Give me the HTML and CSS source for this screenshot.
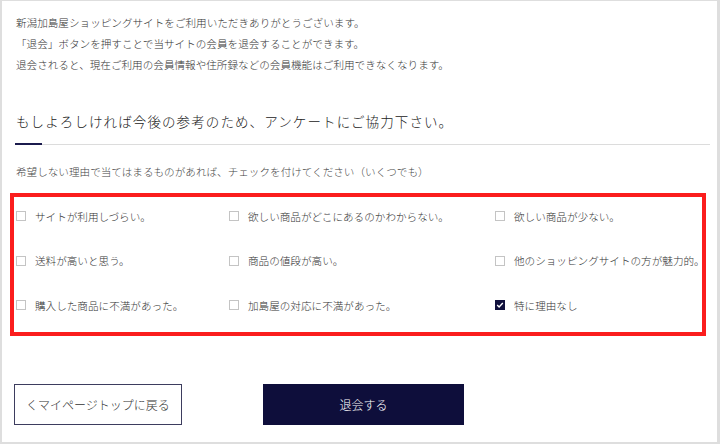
FILE: index.html
```html
<!DOCTYPE html>
<html lang="ja">
<head>
    <meta charset="UTF-8">
    <meta name="viewport" content="width=device-width, initial-scale=1.0">
    <title>退会手続き</title>
    <link rel="stylesheet" href="styles.css">
</head>
<body>
    <div class="page">
        <div class="intro">
            <p>新潟加島屋ショッピングサイトをご利用いただきありがとうございます。</p>
            <p>「退会」ボタンを押すことで当サイトの会員を退会することができます。</p>
            <p>退会されると、現在ご利用の会員情報や住所録などの会員機能はご利用できなくなります。</p>
        </div>

        <h2 class="survey-title">もしよろしければ今後の参考のため、アンケートにご協力下さい。</h2>
        <p class="survey-note">希望しない理由で当てはまるものがあれば、チェックを付けてください（いくつでも）</p>

        <form class="reasons" id="reasonForm">
            <label class="reason"><input type="checkbox" name="reason" value="1">サイトが利用しづらい。</label>
            <label class="reason"><input type="checkbox" name="reason" value="2">欲しい商品がどこにあるのかわからない。</label>
            <label class="reason"><input type="checkbox" name="reason" value="3">欲しい商品が少ない。</label>
            <label class="reason"><input type="checkbox" name="reason" value="4">送料が高いと思う。</label>
            <label class="reason"><input type="checkbox" name="reason" value="5">商品の値段が高い。</label>
            <label class="reason"><input type="checkbox" name="reason" value="6">他のショッピングサイトの方が魅力的。</label>
            <label class="reason"><input type="checkbox" name="reason" value="7">購入した商品に不満があった。</label>
            <label class="reason"><input type="checkbox" name="reason" value="8">加島屋の対応に不満があった。</label>
            <label class="reason"><input type="checkbox" name="reason" value="9" checked>特に理由なし</label>
        </form>

        <div class="actions">
            <button type="button" class="btn btn-back">くマイページトップに戻る</button>
            <button type="submit" form="reasonForm" class="btn btn-leave">退会する</button>
        </div>
    </div>
</body>
</html>
```

FILE: styles.css
```css
html, body {
    margin: 0;
    height: 100%;
}
body {
    background-color: #dedede;
    font-family: "Noto Sans CJK JP", "Noto Sans", sans-serif;
    font-weight: 300;
    color: #333;
    overflow: hidden;
}
.page {
    box-sizing: border-box;
    height: 441px;
    margin: 1px 3px 2px 2px;
    padding: 11px 7px 0 8px;
    background-color: #fff;
}
.intro p {
    margin: 0;
    padding-left: 6px;
    font-size: 10.6px;
    line-height: 21px;
    color: #333;
}
.survey-title {
    position: relative;
    margin: 36px 0 0 5px;
    padding: 0 0 13px 1px;
    border-bottom: 1px solid #dcdcdc;
    font-size: 13.5px;
    font-weight: 300;
    line-height: 20px;
    letter-spacing: 1.1px;
    color: #222;
}
.survey-title::after {
    content: "";
    position: absolute;
    left: 0;
    bottom: -1px;
    width: 27px;
    height: 2px;
    background-color: #1b1b4d;
}
.survey-note {
    margin: 16px 0 0;
    padding-left: 6px;
    font-size: 10.6px;
    line-height: 21px;
    color: #444;
}
.reasons {
    display: grid;
    grid-template-columns: 213px 266px 1fr;
    grid-auto-rows: 22px;
    row-gap: 22.5px;
    margin: 11px 4px 0 0;
    padding: 8px 0 16px 2px;
    border: 4px solid #fb1d1d;
}
.reason {
    display: flex;
    align-items: center;
    font-size: 10.6px;
    color: #333;
    white-space: nowrap;
}
.reason input {
    appearance: none;
    -webkit-appearance: none;
    box-sizing: border-box;
    width: 10px;
    height: 10px;
    margin: 0 9px 0 0;
    border: 1px solid #c4c4c4;
    background-color: #fff;
    flex-shrink: 0;
}
.reason input:checked {
    border-color: #10103c;
    background-color: #10103c;
    background-image: url("data:image/svg+xml;utf8,<svg xmlns='http://www.w3.org/2000/svg' viewBox='0 0 10 10'><path d='M2.2 5.1 L4.1 6.9 L7.8 3.1' fill='none' stroke='white' stroke-width='1.4'/></svg>");
    background-size: 10px 10px;
    background-position: center;
}
.actions {
    display: flex;
    gap: 81px;
    margin: 48px 0 0 4px;
}
.btn {
    box-sizing: border-box;
    height: 41px;
    font-family: inherit;
    font-weight: 300;
    font-size: 12px;
    cursor: pointer;
}
.btn-back {
    width: 168px;
    padding: 0;
    border: 1px solid #3d3d5e;
    background-color: #fff;
    color: #333;
}
.btn-leave {
    width: 201px;
    border: none;
    background-color: #0e0e3b;
    color: #fff;
}
```
